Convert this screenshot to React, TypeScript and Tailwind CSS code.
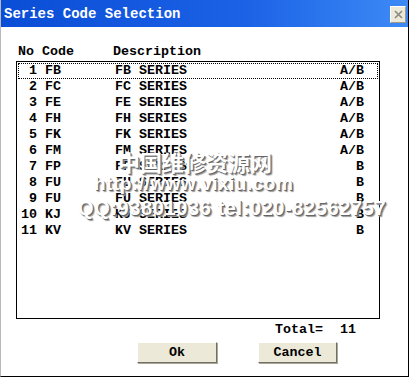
import React from "react";

const rows = [
  { no: 1, code: "FB", desc: "FB SERIES", kind: "A/B" },
  { no: 2, code: "FC", desc: "FC SERIES", kind: "A/B" },
  { no: 3, code: "FE", desc: "FE SERIES", kind: "A/B" },
  { no: 4, code: "FH", desc: "FH SERIES", kind: "A/B" },
  { no: 5, code: "FK", desc: "FK SERIES", kind: "A/B" },
  { no: 6, code: "FM", desc: "FM SERIES", kind: "A/B" },
  { no: 7, code: "FP", desc: "FP SERIES", kind: "B" },
  { no: 8, code: "FU", desc: "FU SERIES", kind: "B" },
  { no: 9, code: "FU", desc: "FU SERIES", kind: "B" },
  { no: 10, code: "KJ", desc: "KJ SERIES", kind: "B" },
  { no: 11, code: "KV", desc: "KV SERIES", kind: "B" },
];

function Button({ label, w }: { label: string; w: string }) {
  return (
    <button
      className={`${w} h-[21px] bg-[#ece9d8] border border-t-white border-l-white border-b-[#716f64] border-r-[#716f64] shadow-[1px_1px_0_#aca899] font-bold text-[13.33px] leading-none text-black`}
    >
      {label}
    </button>
  );
}

export default function App() {
  return (
    <div className="w-[410px] h-[377px] bg-white relative overflow-hidden font-['Liberation_Mono',monospace] text-black">
      <div className="w-[409px] h-[377px] flex flex-col border-r border-b border-black border-l border-l-[#b9b9b9]">
        {/* title bar */}
        <div className="h-[27px] shrink-0 flex items-center justify-between pl-[3px] pr-[2px] bg-[linear-gradient(to_right,#0a4dd6,#1b62e6_60%,#3d8af6)]">
          <span className="text-white font-bold text-[14px] leading-none mt-[1px]">Series Code Selection</span>
          <div className="w-[16px] h-[17px] bg-[#ece9d8] border border-t-white border-l-white border-b-[#9d9a8a] border-r-[#9d9a8a] flex items-center justify-center mt-[1px]">
            <svg width="9" height="9" viewBox="0 0 9 9">
              <path d="M1 1L8 8M8 1L1 8" stroke="#8c8a80" strokeWidth="1.6" />
            </svg>
          </div>
        </div>

        {/* column header */}
        <div className="mt-[17px] h-4 flex text-[13.33px] font-bold leading-4">
          <span className="ml-[17px] w-[95px]">No Code</span>
          <span>Description</span>
        </div>

        {/* list */}
        <div className="mt-px ml-[15px] w-[364px] h-[258px] border border-black p-px">
          {rows.map((r, i) => (
            <div
              key={r.no}
              className={`h-4 flex items-center text-[13.33px] font-bold leading-4 ${
                i === 0 ? "border border-dotted border-black" : "border border-transparent"
              }`}
            >
              <span className="w-[17px] ml-[1px] text-right">{r.no}</span>
              <span className="ml-[8px] w-[70px]">{r.code}</span>
              <span className="flex-1">{r.desc}</span>
              <span className="mr-[13px]">{r.kind}</span>
            </div>
          ))}
        </div>

        {/* total */}
        <div className="h-4 mt-[3px] flex text-[13.33px] font-bold leading-4">
          <span className="ml-[274px] w-[65px]">Total=</span>
          <span>11</span>
        </div>

        {/* buttons */}
        <div className="mt-[2px] flex">
          <div className="ml-[136px]">
            <Button label="Ok" w="w-[80px]" />
          </div>
          <div className="ml-[41px]">
            <Button label="Cancel" w="w-[79px]" />
          </div>
        </div>
      </div>

      {/* watermark overlay */}
      <div className="absolute left-[118px] top-[150px] text-[22px] font-bold text-white font-['Noto_Sans_CJK_SC',sans-serif] leading-none [text-shadow:1px_1px_0_#666,2px_2px_1px_#999]">
        中国维修资源网
      </div>
      <div className="absolute left-[94px] top-[174px] text-[19px] font-bold text-white font-['Liberation_Sans',sans-serif] leading-none tracking-[0.5px] [text-shadow:1px_1px_0_#666,2px_2px_1px_#999]">
        http://www.vixiu.com
      </div>
      <div className="absolute left-[78px] top-[198px] text-[20px] font-bold text-white font-['Liberation_Sans',sans-serif] leading-none tracking-[0.6px] [text-shadow:1px_1px_0_#666,2px_2px_1px_#999]">
        QQ:93801036 tel:020-82562757
      </div>
    </div>
  );
}
